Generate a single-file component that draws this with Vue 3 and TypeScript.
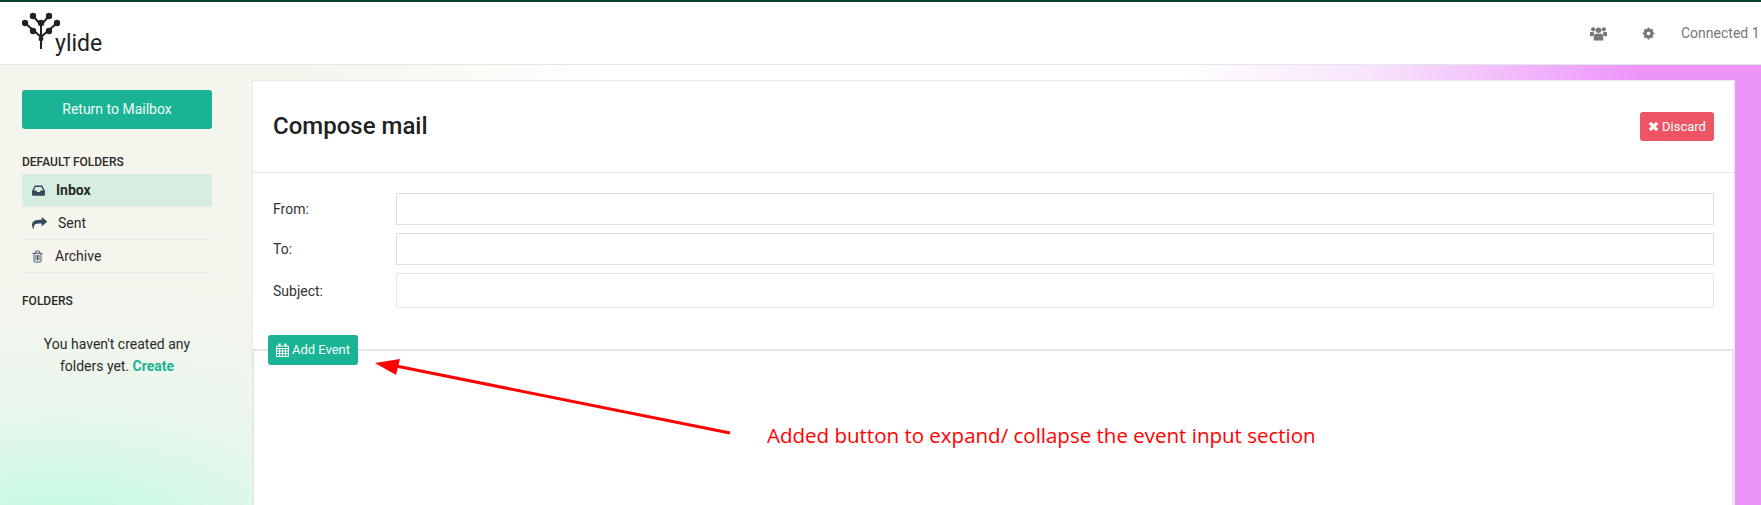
<template>
  <div class="page">
    <header class="topbar">
      <div class="logo">
        <svg class="logo-tree" width="42" height="42" viewBox="0 0 42 42">
          <g stroke="#222" stroke-width="2" fill="none">
            <path d="M19 38V14M19 26L11 19L3 12M19 26L27 19L35 12M19 14L11 5M19 14L27 5" />
          </g>
          <g fill="#222">
            <circle cx="11" cy="5" r="3.200" />
            <circle cx="27" cy="5" r="3.200" />
            <circle cx="19" cy="12" r="3.200" />
            <circle cx="3" cy="12" r="3.200" />
            <circle cx="35" cy="12" r="3.200" />
            <circle cx="11" cy="20" r="3.200" />
            <circle cx="27" cy="20" r="3.200" />
            <circle cx="19" cy="28" r="2.400" />
          </g>
        </svg>
        <span class="logo-text">ylide</span>
      </div>
      <div class="top-actions">
        <svg class="top-icon users" width="17" height="15" viewBox="0 0 16 14" fill="#777">
          <circle cx="3" cy="3" r="2" /><circle cx="13" cy="3" r="2" /><circle cx="8" cy="4" r="2.600" />
          <path d="M0 5.500h3.500L3.800 8 2.800 9.500H0zM16 5.500h-3.500L12.200 8l1 1.500H16zM4.500 7.200h7L12.500 9.500V13.500H3.500V9.500z" />
        </svg>
        <svg class="top-icon gear" width="13" height="13" viewBox="0 0 13 13">
          <circle cx="6.500" cy="6.500" r="3.600" fill="none" stroke="#777" stroke-width="2.600" />
          <path d="M6.500 0.500V12.500M0.500 6.500H12.500M2.300 2.300L10.700 10.700M10.700 2.300L2.300 10.700" stroke="#777" stroke-width="1.700" />
          <circle cx="6.500" cy="6.500" r="1.800" fill="#fff" />
        </svg>
        <span class="connected">Connected 1</span>
      </div>
    </header>

    <div class="layout">
      <aside class="sidebar">
        <button class="return-btn">Return to Mailbox</button>
        <h6 class="side-title">DEFAULT FOLDERS</h6>
        <ul class="folders">
          <li v-for="f in folders" :key="f.name" class="folder" :class="{ active: f.active }">
            <svg v-if="f.icon === 'inbox'" class="folder-icon" :style="{ marginRight: f.gap + 'px' }" width="13" height="11" viewBox="0 0 13 11" fill="#34495e">
              <path d="M2.800 0.500H10.200L13 6V9.500Q13 10.800 11.700 10.800H1.300Q0 10.800 0 9.500V6zM3.500 2L1.900 5.500H4.400L5.200 7H7.800L8.600 5.500H11.100L9.500 2z" fill-rule="evenodd" />
            </svg>
            <svg v-else-if="f.icon === 'share'" class="folder-icon" :style="{ marginRight: f.gap + 'px' }" width="15" height="13" viewBox="0 0 1792 1792" preserveAspectRatio="none" fill="#34495e">
              <path d="M1792 640q0 26-19 45l-512 512q-19 19-45 19t-45-19-19-45v-256h-224q-98 0-175.500 6t-154 21.500-133 42.500-105.500 69.500-80 101-48.500 138.500-17.500 181q0 55 5 123 0 6 2.500 23.500t2.500 26.500q0 15-8.500 25t-23.500 10q-16 0-28-17-7-9-13-22t-13.500-30-10.500-24q-127-285-127-451 0-199 53-333 162-403 875-403h224v-256q0-26 19-45t45-19 45 19l512 512q19 19 19 45z" />
            </svg>
            <svg v-else class="folder-icon" :style="{ marginRight: f.gap + 'px' }" width="11" height="13" viewBox="0 0 11 12" fill="none" stroke="#34495e" stroke-width="0.900">
              <path d="M0.500 2.800H10.500M2 2.800V10.500Q2 11.500 3 11.500H8Q9 11.500 9 10.500V2.800M3.700 2.800V1Q3.700 0.500 4.200 0.500H6.800Q7.300 0.500 7.300 1V2.800M4 4.500V9.800M5.500 4.500V9.800M7 4.500V9.800" />
            </svg>
            <span>{{ f.name }}</span>
          </li>
        </ul>
        <h6 class="side-title second">FOLDERS</h6>
        <p class="empty">You haven't created any<br />folders yet. <a class="create">Create</a></p>
      </aside>

      <main class="card">
        <div class="card-head">
          <h2 class="card-title">Compose mail</h2>
          <button class="discard">
            <svg width="11" height="11" viewBox="0 0 10 10"><path d="M1.700 1.700L8.300 8.300M8.300 1.700L1.700 8.300" stroke="#fff" stroke-width="2.800" /></svg>
            Discard
          </button>
        </div>
        <form class="fields">
          <label v-for="r in rows" :key="r.label" class="field">
            <span class="field-label">{{ r.label }}</span>
            <input class="field-input" :class="r.cls" type="text" />
          </label>
        </form>
        <div class="editor">
          <button class="add-event">
            <svg width="13" height="14" viewBox="0 0 13 14" fill="none" stroke="#fff" stroke-width="1">
              <path d="M0.500 3H12.500V13.500H0.500zM0.500 5.500H12.500M0.500 8H12.500M0.500 10.700H12.500M3.500 5.500V13.500M6.500 5.500V13.500M9.500 5.500V13.500" />
              <path d="M3.500 0.500V3.500M9.500 0.500V3.500" stroke-width="2" />
            </svg>
            Add Event
          </button>
        </div>
      </main>
    </div>

    <!-- annotation over the screenshot -->
    <svg class="arrow" width="1761" height="505" viewBox="0 0 1761 505">
      <path d="M730 433L396 366" stroke="#ff0000" stroke-width="3" fill="none" />
      <path d="M375 363L400 359L396 375z" fill="#ff0000" />
    </svg>
    <div class="note">Added button to expand/ collapse the event input section</div>
  </div>
</template>

<script setup lang="ts">
interface Folder {
  name: string
  icon: string
  gap: number
  active?: boolean
}

const folders: Folder[] = [
  { name: 'Inbox', icon: 'inbox', gap: 11, active: true },
  { name: 'Sent', icon: 'share', gap: 11 },
  { name: 'Archive', icon: 'trash', gap: 12 },
]

const rows = [
  { label: 'From:', cls: 'h-from' },
  { label: 'To:', cls: 'h-to' },
  { label: 'Subject:', cls: 'h-subject' },
]
</script>

<style>
html, body {
  margin: 0;
  overflow: hidden;
}
</style>

<style scoped>
.page {
  position: relative;
  width: 1761px;
  height: 505px;
  overflow: hidden;
  font-family: Roboto, "Liberation Sans", sans-serif;
  font-size: 14px;
  color: #2a2a2a;
  background:
    radial-gradient(ellipse 560px 250px at 60px 535px, #c0fbe0 0, rgba(200, 250, 226, 0.95) 15%, rgba(228, 248, 234, 0.7) 50%, rgba(245, 245, 238, 0) 100%) 0 0 / 252px 100% no-repeat,
    linear-gradient(to right, #f5f5ee 0, #f5f5ee 300px, #ffffff 620px, #ffffff 1180px, #f8e4fb 1370px, #ed94fb 1640px, #ed94fb 1761px);
}

.topbar {
  height: 62px;
  border-top: 2px solid #04402c;
  border-bottom: 1px solid #e3e6ea;
  background: #fff;
  display: flex;
  align-items: center;
  justify-content: space-between;
  padding-left: 22px;
}

.logo {
  display: flex;
  align-items: flex-start;
  height: 50px;
  margin-top: 6px;
  position: relative;
}

.logo-text {
  font-family: Roboto, sans-serif;
  font-size: 23px;
  line-height: 30px;
  color: #222;
  margin: 18px 0 0 -9px;
}

.top-actions {
  display: flex;
  align-items: center;
  color: #777;
}

.users { margin-right: 35px; }
.gear { margin-right: 26px; }

.connected {
  white-space: nowrap;
  width: 80px;
  overflow: hidden;
}

.layout {
  display: grid;
  grid-template-columns: 252px 1483px;
  height: 440px;
}

.sidebar {
  padding: 25px 0 0 22px;
  width: 190px;
}

.return-btn {
  display: block;
  width: 190px;
  height: 39px;
  padding: 0 0 2px;
  background: #1ab394;
  color: #f0fff8;
  border: none;
  border-radius: 3px;
  font: inherit;
}

.side-title {
  margin: 25px 0 4px;
  font-size: 12px;
  font-weight: 500;
  line-height: 16px;
}

.side-title.second {
  margin-top: 20px;
}

.folders {
  list-style: none;
  margin: 0;
  padding: 0;
}

.folder {
  height: 32px;
  padding-left: 10px;
  border-bottom: 1px solid #e7eaec;
  display: flex;
  align-items: center;
  box-sizing: content-box;
}

.folder.active {
  background: #d6eee0;
  font-weight: 700;
}

.folder-icon {
  flex-shrink: 0;
}

.empty {
  margin: 24px 0 0;
  text-align: center;
  line-height: 22px;
}

.create {
  color: #1ab394;
  font-weight: 700;
}

.card {
  margin-top: 15px;
  background: #fff;
  border: 1px solid #e7eaec;
  border-bottom: none;
  box-sizing: border-box;
}

.card-head {
  height: 91px;
  border-bottom: 1px solid #e7eaec;
  display: flex;
  align-items: center;
  justify-content: space-between;
  padding: 0 20px;
  box-sizing: content-box;
}

.card-title {
  margin: 0 0 2px;
  font-size: 24px;
  font-weight: 500;
  color: #222;
}

.discard {
  height: 29px;
  width: 74px;
  padding: 0;
  background: #ed5565;
  color: #fff;
  border: none;
  border-radius: 3px;
  font: inherit;
  font-size: 13px;
  display: flex;
  align-items: center;
  justify-content: center;
  gap: 3px;
}

.fields {
  padding: 20px 20px 0;
  display: flex;
  flex-direction: column;
  gap: 8px;
}

.field {
  display: flex;
  align-items: center;
}

.field-label {
  width: 123px;
  color: #333;
}

.field-input {
  flex: 1;
  box-sizing: border-box;
  background: #fff;
  border: 1px solid #dddddd;
  border-radius: 1px;
  padding: 0;
  outline: none;
}

.h-from { height: 32px; }
.h-to { height: 32px; }
.h-subject { height: 35px; border-color: #e7e7e7; }

.editor {
  margin-top: 41px;
  border-top: 2px solid #e5e5e5;
  border-right: 2px solid #e5e5e5;
  border-left: 1px solid #e5e5e5;
  height: 200px;
  position: relative;
}

.add-event {
  position: absolute;
  left: 14px;
  top: -16px;
  width: 90px;
  height: 30px;
  padding: 0 0 1px;
  background: #1ab394;
  color: #f3fffb;
  border: none;
  border-radius: 3px;
  font: inherit;
  font-size: 13px;
  display: flex;
  align-items: center;
  justify-content: center;
  gap: 3px;
}

.arrow {
  position: absolute;
  left: 0;
  top: 0;
  pointer-events: none;
}

.note {
  position: absolute;
  left: 767px;
  top: 421px;
  font-family: "Open Sans", sans-serif;
  font-size: 20.5px;
  line-height: 28px;
  color: #ff0000;
  white-space: nowrap;
}
</style>
